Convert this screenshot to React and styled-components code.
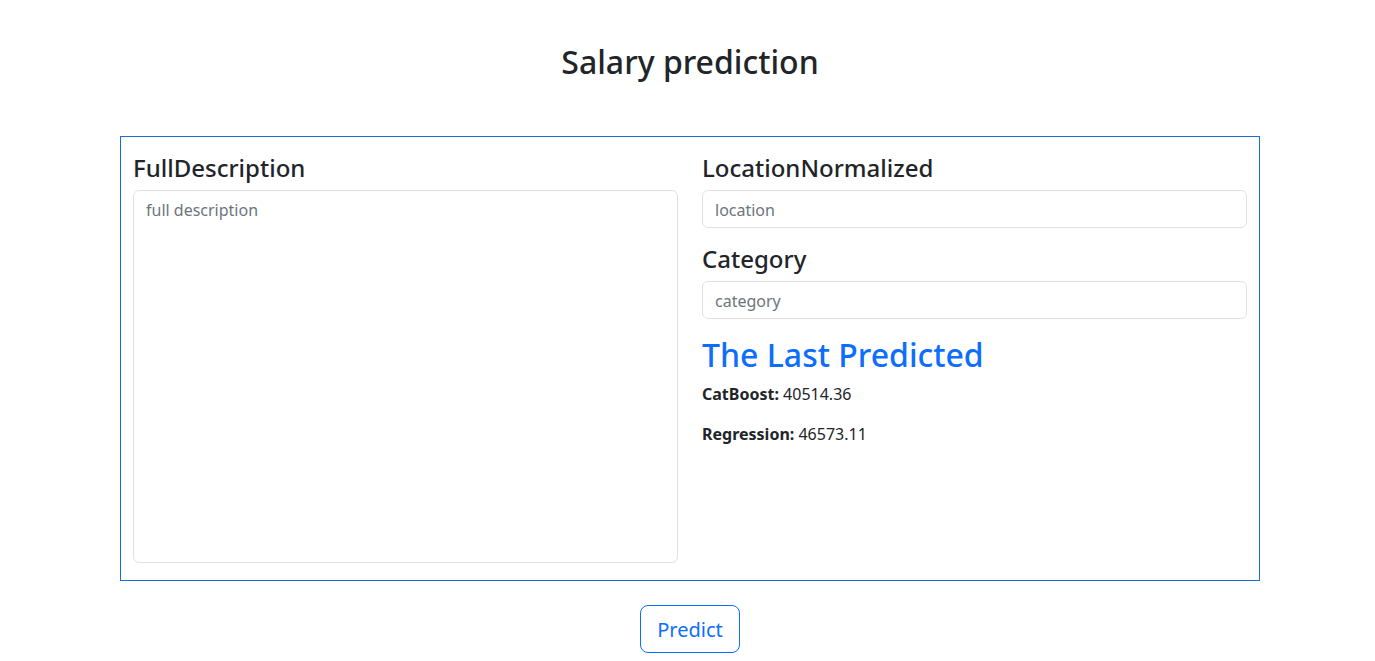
import React from "react";
import styled, { createGlobalStyle } from "styled-components";

const GlobalStyle = createGlobalStyle`
  body {
    margin: 0;
    padding-left: 5px;
    background: #fff;
    color: #212529;
    font-family: "Noto Sans", "DejaVu Sans", sans-serif;
    font-size: 16px;
    line-height: 1.5;
  }
  * { box-sizing: border-box; }
`;

const Page = styled.div`
  width: 1140px;
  margin: 0 auto;
  display: flex;
  flex-direction: column;
  align-items: center;
`;

const Title = styled.h2`
  margin: 43px 0 55px;
  font-size: 32px;
  font-weight: 500;
  line-height: 1.2;
`;

const Card = styled.form`
  width: 100%;
  border: 1px solid #1a6ad8;
  padding: 17px 12px;
  display: grid;
  grid-template-columns: 1fr 1fr;
  column-gap: 24px;
`;

const Column = styled.div`
  display: flex;
  flex-direction: column;
`;

const Label = styled.label`
  font-size: 24px;
  font-weight: 500;
  line-height: 1.2;
  margin-bottom: 7px;
`;

const fieldStyle = `
  width: 100%;
  font-family: inherit;
  font-size: 16px;
  line-height: 1.5;
  color: #212529;
  padding: 7px 12px 5px;
  border: 1px solid #dee2e6;
  border-radius: 6px;
  background: #fff;
  outline: none;
  &::placeholder { color: #6c757d; }
`;

const Input = styled.input`
  ${fieldStyle}
  height: 38px;
  margin-bottom: 17px;
`;

const TextArea = styled.textarea`
  ${fieldStyle}
  height: 373px;
  resize: none;
`;

const ResultTitle = styled.h2`
  margin: 0 0 8px;
  font-size: 32px;
  font-weight: 500;
  line-height: 1.2;
  color: #0d6efd;
`;

const Result = styled.p`
  margin: 0 0 16px;
  font-size: 16px;
`;

const PredictButton = styled.button`
  margin: 24px 0 8px;
  font-family: inherit;
  font-size: 20px;
  line-height: 1.5;
  padding: 9px 16px 7px;
  color: #0d6efd;
  background: #fff;
  border: 1px solid #0d6efd;
  border-radius: 8px;
  cursor: pointer;
`;

export default function App() {
  return (
    <>
      <GlobalStyle />
      <Page>
        <Title>Salary prediction</Title>
        <Card onSubmit={(e) => e.preventDefault()}>
          <Column>
            <Label>FullDescription</Label>
            <TextArea placeholder="full description" />
          </Column>
          <Column>
            <Label>LocationNormalized</Label>
            <Input placeholder="location" />
            <Label>Category</Label>
            <Input placeholder="category" />
            <ResultTitle>The Last Predicted</ResultTitle>
            <Result>
              <b>CatBoost:</b> 40514.36
            </Result>
            <Result>
              <b>Regression:</b> 46573.11
            </Result>
          </Column>
        </Card>
        <PredictButton>Predict</PredictButton>
      </Page>
    </>
  );
}
